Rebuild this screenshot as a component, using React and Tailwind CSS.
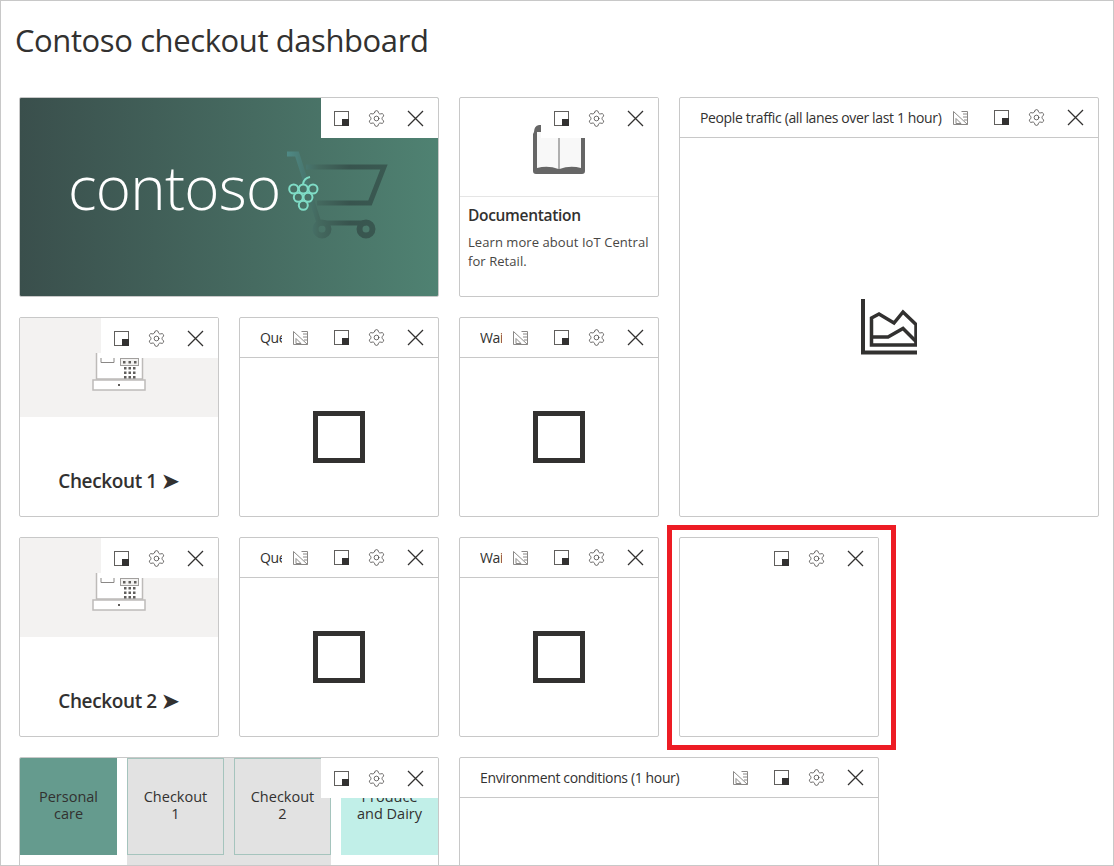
import React from "react";
import {Settings} from "lucide-react";

// --- ICONS ---
const SizeIcon = () => (
  <svg width="15" height="15" viewBox="0 0 15 15">
    <rect x="0.5" y="0.5" width="14" height="14" fill="#fff" stroke="#605e5c" />
    <rect x="8" y="8" width="7" height="7" fill="#323130" />
  </svg>
);

const CloseIcon = () => (
  <svg width="17" height="17" viewBox="0 0 17 17" stroke="#323130" strokeWidth="1.3">
    <path d="M1 1 16 16M16 1 1 16" />
  </svg>
);

const RulerIcon = () => (
  <svg width="15" height="14" viewBox="0 0 15 14" fill="none" stroke="#8a8886" strokeWidth="1">
    <path d="M.5 .5V13.5H14.5V.5H8.5M.5 .5 14.5 13.5M3 7.5 8 12.5H3ZM10 3H14.5M10 6H14.5M11 9H14.5" />
  </svg>
);

const BookIcon = () => (
  <svg width="52" height="52" viewBox="0 0 52 52">
    <path d="M1 8Q1 2 6 1H8V8H48V8H52V47Q52 50 49 50H3Q0 50 0 47V10Z" fill="#666" />
    <path d="M4 8H25.5V45Q15 41 4 44ZM26.5 8H48V44Q37 41 26.5 45Z" fill="#f8f8f8" />
  </svg>
);

const RegisterIcon = () => (
  <svg width="54" height="46" viewBox="0 0 54 46" fill="none" stroke="#bdbbb9">
    <path d="M4.5 8V34H50.5V8" fill="#fff" strokeWidth="1.5" />
    <rect x="1" y="35" width="52" height="10" fill="#fff" strokeWidth="1.5" />
    <path d="M9 13V17.5H22V13" stroke="#8a8886" />
    <rect x="28.5" y="13.5" width="18" height="7" fill="#f3f2f1" stroke="#a19f9d" />
    <g fill="#605e5c" stroke="none">
      <rect x="31" y="16" width="2.5" height="2.5" />
      <rect x="36.5" y="16" width="2.5" height="2.5" />
      <rect x="42" y="16" width="2.5" height="2.5" />
      <rect x="32" y="22" width="2.5" height="2.5" />
      <rect x="36.5" y="22" width="2.5" height="2.5" />
      <rect x="41" y="22" width="2.5" height="2.5" />
      <rect x="32" y="26.5" width="2.5" height="2.5" />
      <rect x="36.5" y="26.5" width="2.5" height="2.5" />
      <rect x="41" y="26.5" width="2.5" height="2.5" />
      <rect x="32" y="31" width="2.5" height="2.5" />
      <rect x="36.5" y="31" width="2.5" height="2.5" />
      <rect x="41" y="31" width="2.5" height="2.5" />
      <rect x="26" y="39" width="2" height="2" />
    </g>
  </svg>
);

const AreaChartIcon = () => (
  <svg width="56" height="56" viewBox="0 0 56 56" fill="none" stroke="#323130" strokeWidth="3.5">
    <path d="M2 0V53.5H56" strokeWidth="4" />
    <path d="M10.5 46V19L18 15 33 24 42 13 55 25.5V46Z" />
    <path d="M10.5 38H27L42 29.5 55 42.5" />
  </svg>
);

const BannerArt = () => (
  <svg width="104" height="92" viewBox="0 0 104 92" fill="none">
    <defs>
      <linearGradient id="cartFade" gradientUnits="userSpaceOnUse" x1="0" y1="0" x2="104" y2="0">
        <stop offset="0" stopColor="#4f8a86" />
        <stop offset="0.3" stopColor="#44695f" />
        <stop offset="0.6" stopColor="#38544e" />
        <stop offset="1" stopColor="#3a5a52" />
      </linearGradient>
    </defs>
    <g stroke="url(#cartFade)" strokeWidth="5">
      <path d="M0 4H10L33 76" />
      <path d="M19 17H97L83 53H30" />
      <path d="M33 73H79" />
      <circle cx="35" cy="79" r="6.5" strokeWidth="6" />
      <circle cx="79" cy="79" r="6.5" strokeWidth="6" />
    </g>
    <g stroke="#7fdcc6" strokeWidth="2">
      <circle cx="6.7" cy="39" r="4.5" />
      <circle cx="16.3" cy="39" r="4.5" />
      <circle cx="26" cy="39" r="4.5" />
      <circle cx="11.3" cy="47.3" r="4.5" />
      <circle cx="21" cy="47.3" r="4.5" />
      <circle cx="16.3" cy="55.3" r="4.5" />
      <path d="M16 34Q17 28 23 27" />
    </g>
  </svg>
);

// --- TILE PARTS ---
const Controls = ({ruler}) => (
  <div className="flex h-10 shrink-0 items-center pr-[3px]">
    {ruler && (
      <span className="flex w-[43px] justify-end pr-[17px]">
        <RulerIcon />
      </span>
    )}
    <span className="flex w-8 justify-center">
      <SizeIcon />
    </span>
    <span className="flex w-[38px] justify-center">
      <Settings size={19} strokeWidth={1} color="#484644" />
    </span>
    <span className="flex w-10 justify-center">
      <CloseIcon />
    </span>
  </div>
);

const Tile = ({className = "", children}) => (
  <div className={`relative overflow-hidden rounded-[2px] border border-[#c8c8c8] bg-white ${className}`}>
    {children}
  </div>
);

// toolbar floating over the tile content
const Overlay = () => (
  <div className="absolute top-0 right-0 w-[117px] bg-white pl-1">
    <Controls />
  </div>
);

const ChartTile = ({title, className = "", children}) => (
  <Tile className={`flex flex-col ${className}`}>
    <div className="flex h-10 shrink-0 items-center justify-between border-b border-[#c8c8c8] pl-5">
      <div className="min-w-0 flex-1 overflow-hidden text-[14px] tracking-[-0.026em] whitespace-nowrap text-[#323130]">
        {title}
      </div>
      <Controls ruler />
    </div>
    <div className="flex flex-1 items-center justify-center">{children}</div>
  </Tile>
);

const SquareTile = ({title}) => (
  <ChartTile title={title}>
    <div className="h-[52px] w-[52px] border-[5px] border-[#323130]" />
  </ChartTile>
);

const CheckoutTile = ({label}) => (
  <Tile className="flex flex-col">
    <div className="flex h-[99px] items-center justify-center bg-[#f3f2f1]">
      <RegisterIcon />
    </div>
    <div className="flex flex-1 items-center justify-center pt-[29px] text-[19px] font-semibold tracking-[-0.02em] text-[#323130]">
      {label}
      <span className="ml-1 font-['DejaVu_Sans'] text-[23px] leading-none font-normal">➤</span>
    </div>
    <Overlay />
  </Tile>
);

const Cell = ({className = "", children}) => (
  <div className={`flex h-[97px] w-[97px] items-center justify-center pb-[3px] text-center text-[14.5px] leading-[17px] text-[#323130] ${className}`}>
    <div>{children}</div>
  </div>
);

export default function App() {
  return (
    <div className="relative h-[866px] w-[1114px] overflow-hidden border border-[#c8c8c8] bg-white font-['Open_Sans','Noto_Sans',sans-serif]">
      <h1 className="pt-[18px] pl-[14px] text-[31px] leading-[42px] font-normal tracking-[-0.013em] text-[#323130]">
        Contoso checkout dashboard
      </h1>
      <div className="mt-[36px] grid grid-cols-[repeat(5,200px)] auto-rows-[200px] gap-5 pl-[18px]">
        {/* Row 1 */}
        <Tile className="col-span-2 flex items-start bg-gradient-to-r from-[#3a4f4c] to-[#4f8272]">
          <div className="mt-[48px] ml-[48px] text-[60px] leading-[82px] font-light tracking-[-0.012em] text-white">
            contoso
          </div>
          <div className="mt-[52px] ml-[7px] shrink-0">
            <BannerArt />
          </div>
          <Overlay />
        </Tile>
        <Tile className="flex flex-col">
          <div className="flex h-[99px] shrink-0 items-center justify-center border-b border-[#e5e5e5] pt-[6px]">
            <BookIcon />
          </div>
          <div className="px-2 pt-[8px]">
            <div className="text-[15.5px] leading-[20px] font-semibold tracking-[-0.02em] text-[#323130]">Documentation</div>
            <div className="mt-[8px] text-[13px] leading-[19px] tracking-[0.005em] text-[#484644]">
              Learn more about IoT Central
              <br />
              for Retail.
            </div>
          </div>
          <Overlay />
        </Tile>
        <ChartTile title="People traffic (all lanes over last 1 hour)" className="col-span-2 row-span-2">
          <AreaChartIcon />
        </ChartTile>

        {/* Row 2 */}
        <CheckoutTile label="Checkout 1" />
        <SquareTile title="Queue length" />
        <SquareTile title="Wait time" />

        {/* Row 3 */}
        <CheckoutTile label="Checkout 2" />
        <SquareTile title="Queue length" />
        <SquareTile title="Wait time" />
        <Tile>
          <Overlay />
        </Tile>

        {/* Row 4 */}
        <Tile className="col-span-2">
          <div className="flex">
            <Cell className="bg-[#659b8e]">
              Personal
              <br />
              care
            </Cell>
            <div className="ml-[10px] flex h-[200px] gap-[10px] bg-[#e2e2e2]">
              <Cell className="border border-[#a5c4bd]">
                Checkout
                <br />1
              </Cell>
              <Cell className="border border-[#a5c4bd]">
                Checkout
                <br />2
              </Cell>
            </div>
            <Cell className="ml-[10px] bg-[#c1efe8]">
              Produce
              <br />
              and Dairy
            </Cell>
          </div>
          <Overlay />
        </Tile>
        <ChartTile title="Environment conditions (1 hour)" className="col-span-2" />
      </div>

      {/* red callout around the empty tile */}
      <div className="absolute top-[524px] left-[666px] h-[225px] w-[229px] border-[5px] border-[#ed1c24]" />
    </div>
  );
}
